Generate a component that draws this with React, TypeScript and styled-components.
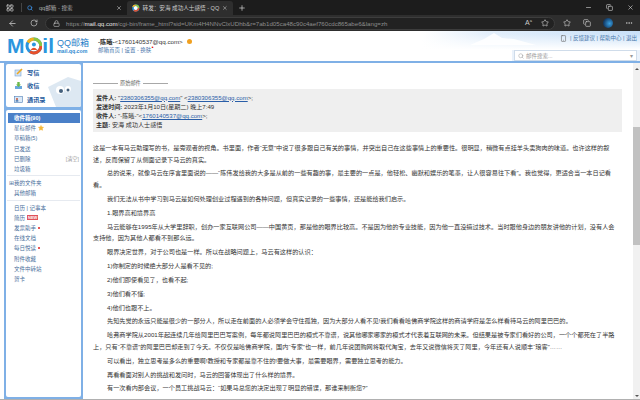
import styled, { createGlobalStyle } from 'styled-components';
import { ArrowLeft, RotateCw, Lock, Plus, X, Minus, Copy, Star, Ellipsis, Search, Smartphone, LayoutGrid } from 'lucide-react';

const GlobalStyle = createGlobalStyle`
  html, body { margin: 0; padding: 0; background: #fff; }
  body { font-family: "Liberation Sans", "Noto Sans CJK SC", sans-serif; }
`;

const Page = styled.div`
  width: 640px;
  height: 400px;
  overflow: hidden;
  display: flex;
  flex-direction: column;
  font-size: 6.25px;
  color: #333;
`;

const TabBar = styled.div`
  height: 15px;
  background: #1c1c1c;
  display: flex;
  align-items: flex-end;
  padding-left: 6px;
  color: #bbb;
  flex: none;
`;

const TabSwitch = styled.div`
  width: 16px;
  height: 9px;
  display: flex;
  align-items: center;
  border-right: 1px solid #444;
  box-sizing: border-box;
  margin-bottom: 3px;
  color: #ddd;
`;

const Tab = styled.div<{ $active?: boolean }>`
  width: ${(p) => (p.$active ? '106px' : '105px')};
  height: 14px;
  box-sizing: border-box;
  padding: 0 5px;
  display: flex;
  align-items: center;
  gap: ${(p) => (p.$active ? '3px' : '6px')};
  border-radius: 3px 3px 0 0;
  font-size: 5.6px;
  background: ${(p) => (p.$active ? '#2e2e2e' : 'transparent')};
  color: ${(p) => (p.$active ? '#ccc' : '#aaa')};
  span { flex: 1; white-space: nowrap; }
`;

const NewTab = styled.div`
  margin: 0 0 3px 5px;
  height: 8px;
  color: #ddd;
`;

const WindowButtons = styled.div`
  margin-left: auto;
  display: flex;
  gap: 14px;
  padding: 0 6px 4px 0;
  color: #ddd;
`;

const AddressBar = styled.div`
  height: 16px;
  background: #2e2e2e;
  display: flex;
  align-items: center;
  padding: 0 6px 0 8px;
  color: #ccc;
  flex: none;
`;

const NavButtons = styled.div`
  display: flex;
  gap: 13px;
  width: 37px;
  flex: none;
`;

const UrlPill = styled.div`
  width: 510px;
  height: 13px;
  box-sizing: border-box;
  border: 1px solid #3d3d3d;
  border-radius: 7px;
  background: #222;
  display: flex;
  align-items: center;
  padding: 0 5px 0 7px;
  gap: 6px;
  flex: none;
`;

const Url = styled.div`
  flex: 1;
  font-size: 6.15px;
  white-space: nowrap;
  color: #8d8d8d;
  b { color: #e4e4e4; font-weight: 400; }
`;

const ReadAloud = styled.div`
  font-size: 7px;
  line-height: 8px;
  color: #ccc;
  margin-right: 3px;
  sup { font-size: 4px; line-height: 0; }
`;

const ToolIcons = styled.div`
  display: flex;
  align-items: center;
  gap: 12px;
  margin-left: 8px;
`;

const Avatar = styled.div`
  width: 10px;
  height: 10px;
  border-radius: 50%;
  background: radial-gradient(circle at 65% 55%, #3aa0e0, #123a66 70%);
`;

const MailHeader = styled.div`
  height: 32px;
  flex: none;
  box-sizing: border-box;
  border-bottom: 2px solid #7fb0e6;
  display: flex;
  position: relative;
  background:
    linear-gradient(to bottom, rgba(255, 255, 255, 0) 10%, #fff 62%),
    linear-gradient(90deg, #fff 66%, #e3effb 76%, #c9e0f8 100%);
`;

const Logo = styled.div`
  width: 90px;
  margin-left: 7px;
  flex: none;
  display: flex;
  align-items: center;
  gap: 3px;
`;

const LogoWord = styled.div`
  font: 700 21px/20px "Liberation Sans", sans-serif;
  color: #2b96de;
  display: flex;
  align-items: center;
  width: 47px;
`;

const LogoSide = styled.div`
  display: flex;
  flex-direction: column;
  color: #2a7fc8;
  font-size: 9px;
  line-height: 10px;
  white-space: nowrap;
  small { font-size: 5.2px; line-height: 7px; font-weight: 700; color: #2f8ad0; }
`;

const Account = styled.div`
  margin-left: 1px;
  padding-top: 6px;
  line-height: 9px;
  font-size: 6.2px;
  white-space: nowrap;
  color: #333;
  b { font-weight: 700; }
`;

const AccountLinks = styled.div`
  color: #4a78ac;
  font-size: 5.5px;
  line-height: 9px;
  sup { color: #d00; font-size: 6px; line-height: 0; }
`;

const InfoDot = styled.span`
  display: inline-block;
  width: 5px;
  height: 5px;
  margin-left: 4px;
  border-radius: 50%;
  background: #f0a020;
`;

const HeaderRight = styled.div`
  margin-left: auto;
  width: 128px;
  padding: 3px 3px 0 0;
  box-sizing: border-box;
  display: flex;
  flex-direction: column;
  align-items: flex-end;
  gap: 7px;
  position: relative;
`;

const HeaderLinks = styled.div`
  display: flex;
  align-items: center;
  gap: 3px;
  font-size: 5.5px;
  line-height: 9px;
  color: #4a78ac;
  white-space: nowrap;
`;

const SearchStrip = styled.div`
  align-self: stretch;
  margin-right: -3px;
  padding: 0 3px 0 2px;
  height: 11px;
  background: #eaf2fb;
`;

const SearchBox = styled.div`
  height: 9px;
  background: #fff;
  border: 1px solid #cfdcea;
  display: flex;
  align-items: center;
  gap: 2px;
  padding: 0 3px;
  color: #999;
  font-size: 5.5px;
  span { flex: 1; }
`;

const Clouds = styled.svg`
  position: absolute;
  left: 470px;
  top: 0;
`;

const Body = styled.div`
  flex: 1;
  display: flex;
  min-height: 0;
`;

const Sidebar = styled.div`
  width: 79px;
  margin-left: 4px;
  flex: none;
  box-sizing: border-box;
  background: #7fb0e6;
  padding: 1px 2px 2px;
  display: flex;
  flex-direction: column;
  gap: 3px;
`;

const QuickBox = styled.div`
  height: 43px;
  flex: none;
  background: #fff;
  border-radius: 2px;
  position: relative;
  overflow: hidden;
  padding: 1.5px 0 0 8px;
  display: flex;
  flex-direction: column;
  gap: 0.5px;
  box-sizing: border-box;
`;

const QuickItem = styled.div`
  height: 13px;
  display: flex;
  align-items: center;
  gap: 4px;
  font-size: 6.2px;
  font-weight: 700;
  color: #245a9c;
  position: relative;
`;

const Penguin = styled.svg`
  position: absolute;
  right: 0;
  bottom: 0;
`;

const FolderBox = styled.div`
  flex: 1;
  background: #fff;
  border-radius: 2px;
  padding-top: 3px;
  color: #4a6f9c;
`;

const FolderRow = styled.div<{ $selected?: boolean; $group?: boolean }>`
  height: 10.2px;
  line-height: 10px;
  font-size: 5.5px;
  margin: 0 1px 0 2px;
  padding-left: ${(p) => (p.$group ? '1px' : '6px')};
  display: flex;
  align-items: center;
  white-space: nowrap;
  background: ${(p) => (p.$selected ? '#4a80c8' : 'transparent')};
  color: ${(p) => (p.$selected ? '#fff' : '#4a6f9c')};
  font-weight: ${(p) => (p.$selected ? 700 : 400)};
`;

const Divider = styled.div`
  height: 1px;
  background: #e6eaf0;
  margin: 1px 1px 2px;
`;

const ClearTag = styled.span`
  margin-left: auto;
  margin-right: 1px;
  color: #999;
  font-size: 5.2px;
`;

const NewBadge = styled.span`
  background: #e0525a;
  color: #fff;
  font: 700 4px/5px "Liberation Sans", sans-serif;
  padding: 0 1px;
  margin-left: 2px;
`;

const RedDot = styled.span`
  width: 2px;
  height: 2px;
  border-radius: 50%;
  background: #e02020;
  margin-left: 2px;
`;

const Content = styled.div`
  flex: 1;
  min-width: 0;
  padding: 14px 11px 0 10px;
  color: #333;
  overflow: hidden;
`;

const OriginalMark = styled.div`
  display: flex;
  align-items: center;
  gap: 2px;
  font-size: 5.2px;
  line-height: 12px;
  color: #666;
  i { width: 25px; height: 1px; background: #a8a8a8; display: block; }
`;

const QuoteBox = styled.div`
  background: #efefef;
  padding: 3.5px 3px;
  height: 43px;
  box-sizing: border-box;
  margin: 0 0 10px;
  font-size: 6.1px;
  line-height: 9.3px;
  color: #333;
  white-space: nowrap;
  b { font-weight: 700; }
  a { color: #2a5ea8; text-decoration: underline; }
`;

const Para = styled.p<{ $indent?: boolean }>`
  margin: 0 0 2.4px;
  padding-right: 2px;
  font-size: 6.18px;
  line-height: 11.5px;
  text-indent: ${(p) => (p.$indent ? '14px' : '0')};
`;

const Scrollbar = styled.div`
  width: 7px;
  flex: none;
  background: #f1f1f1;
  display: flex;
  flex-direction: column;
  align-items: center;
`;

const ScrollArrow = styled.div<{ $down?: boolean }>`
  width: 0;
  height: 0;
  margin: ${(p) => (p.$down ? '2px' : '5px')} 0 2px;
  border-left: 2px solid transparent;
  border-right: 2px solid transparent;
  border-${(p) => (p.$down ? 'top' : 'bottom')}: 2px solid #555;
`;

const ScrollThumb = styled.div`
  width: 100%;
  height: 118px;
  margin-top: 55px;
  background: #c1c1c1;
`;

const ScrollSpace = styled.div`
  flex: 1;
`;

const BottomEdge = styled.div`
  height: 1px;
  flex: none;
  background: #b0b0b0;
`;

function LogoRing() {
  return (
    <svg width="18" height="18" viewBox="0 0 18 18">
      <circle cx="9" cy="9" r="7" fill="none" stroke="#2b96de" strokeWidth="3" />
      <path d="M3 5.4 A7 7 0 0 1 9 2" fill="none" stroke="#f4b21c" strokeWidth="3" />
      <path d="M9 2 A7 7 0 0 1 16 9" fill="none" stroke="#8cc63f" strokeWidth="3" />
      <path d="M16 9 A7 7 0 0 1 5 14.7" fill="none" stroke="#e8502a" strokeWidth="3" />
      <circle cx="9" cy="7.5" r="2" fill="#2b96de" />
      <path d="M5.5 13 Q9 8.5 12.5 13 Z" fill="#e8502a" />
    </svg>
  );
}

function TabLogo() {
  return (
    <svg width="8" height="8" viewBox="0 0 8 8">
      <circle cx="4" cy="4" r="3" fill="#fff" stroke="#2a94dc" strokeWidth="1.6" />
      <path d="M1 3 A3 3 0 0 1 4 1" fill="none" stroke="#f4b21c" strokeWidth="1.6" />
      <path d="M4 1 A3 3 0 0 1 7 4" fill="none" stroke="#8cc63f" strokeWidth="1.6" />
      <path d="M7 4 A3 3 0 0 1 2 6.3" fill="none" stroke="#e8502a" strokeWidth="1.6" />
    </svg>
  );
}

function ComposeIcon() {
  return (
    <svg width="9" height="9" viewBox="0 0 9 9">
      <rect x="1" y="2" width="6" height="6" fill="#cfe2f7" stroke="#7ba3d0" strokeWidth="0.6" />
      <path d="M3 6 L8 1" stroke="#f2a81c" strokeWidth="1.6" />
    </svg>
  );
}

function InboxIcon() {
  return (
    <svg width="9" height="9" viewBox="0 0 9 9">
      <rect x="1" y="5" width="7" height="3" fill="#69a8dc" />
      <path d="M3.3 1 H5.7 V3.5 H7 L4.5 6 L2 3.5 H3.3 Z" fill="#6cb84a" />
    </svg>
  );
}

function ContactsIcon() {
  return (
    <svg width="9" height="9" viewBox="0 0 9 9">
      <rect x="0.5" y="1.5" width="8" height="6" fill="#dbe9f8" stroke="#4f7fb8" strokeWidth="0.6" />
      <circle cx="3" cy="4" r="1" fill="#c0563a" />
      <rect x="1.7" y="5.2" width="2.6" height="1.4" fill="#3f6ea8" />
    </svg>
  );
}

function App() {
  return (
    <Page>
      <GlobalStyle />
      <TabBar>
        <TabSwitch>
          <LayoutGrid size={8} />
        </TabSwitch>
        <Tab>
          <Search size={6} color="#3b8ee0" strokeWidth={3} />
          <span>qq邮箱 - 搜索</span>
          <X size={6} color="#ddd" />
        </Tab>
        <Tab $active>
          <TabLogo />
          <span>转发：安海 成功人士感悟 - QQ</span>
          <X size={6} color="#ddd" />
        </Tab>
        <NewTab>
          <Plus size={8} />
        </NewTab>
        <WindowButtons>
          <Minus size={7} />
          <Copy size={7} />
          <X size={7} />
        </WindowButtons>
      </TabBar>
      <AddressBar>
        <NavButtons>
          <ArrowLeft size={9} />
          <RotateCw size={8} />
        </NavButtons>
        <UrlPill>
          <Lock size={7} />
          <Url>
            https://<b>mail.qq.com</b>/cgi-bin/frame_html?sid=UKm4H4NNvClxUDhb&amp;r=7ab1d05ca48c90c4aef760cdc865abe6&amp;lang=zh
          </Url>
          <ReadAloud>
            A<sup>a</sup>
          </ReadAloud>
          <Star size={8} />
        </UrlPill>
        <ToolIcons>
          <Star size={8} />
          <Copy size={8} />
          <Avatar />
          <Ellipsis size={8} />
        </ToolIcons>
      </AddressBar>
      <MailHeader>
        <Clouds width="66" height="14" viewBox="0 0 66 14">
          <path d="M0 14 L14 8 L24 2 L32 7 L44 8 L66 14 Z" fill="#fff" opacity="0.85" />
        </Clouds>
        <Logo>
          <LogoWord>
            M<LogoRing />il
          </LogoWord>
          <LogoSide>
            QQ邮箱
            <small>mail.qq.com</small>
          </LogoSide>
        </Logo>
        <Account>
          <b>-陈曦-</b>&lt;1760140537@qq.com&gt;
          <InfoDot />
          <AccountLinks>
            邮箱首页 | 设置 - 换肤<sup>•</sup>
          </AccountLinks>
        </Account>
        <HeaderRight>
          <HeaderLinks>
            <Smartphone size={7} color="#666" /> | 反馈建议 | 帮助中心 | 退出
          </HeaderLinks>
          <SearchStrip>
            <SearchBox>
              <Search size={6} />
              <span>邮件搜索...</span>▾
            </SearchBox>
          </SearchStrip>
        </HeaderRight>
      </MailHeader>
      <Body>
        <Sidebar>
          <QuickBox>
            <Penguin width="33" height="32" viewBox="0 0 33 32">
              <path d="M0 12 L20 2 L33 6 V32 H8 Z" fill="#dde8f2" />
              <circle cx="12" cy="15" r="4" fill="#fff" />
              <circle cx="20" cy="14" r="3" fill="#fff" />
              <circle cx="13" cy="16" r="2" fill="#44607c" />
              <circle cx="20" cy="15" r="1.5" fill="#44607c" />
            </Penguin>
            <QuickItem>
              <ComposeIcon />
              写信
            </QuickItem>
            <QuickItem>
              <InboxIcon />
              收信
            </QuickItem>
            <QuickItem>
              <ContactsIcon />
              通讯录
            </QuickItem>
          </QuickBox>
          <FolderBox>
            <FolderRow $selected>收件箱(90)</FolderRow>
            <FolderRow>
              星标邮件 <Star size={6} fill="#f4b93c" color="#f4b93c" style={{ marginLeft: 2 }} />
            </FolderRow>
            <FolderRow>草稿箱(5)</FolderRow>
            <FolderRow>已发送</FolderRow>
            <FolderRow>
              已删除<ClearTag>[清空]</ClearTag>
            </FolderRow>
            <FolderRow>垃圾箱</FolderRow>
            <Divider />
            <FolderRow $group>⊞我的文件夹</FolderRow>
            <FolderRow>其他邮箱</FolderRow>
            <Divider />
            <FolderRow>日历 | 记事本</FolderRow>
            <FolderRow>
              简历<NewBadge>NEW</NewBadge>
            </FolderRow>
            <FolderRow>
              发票助手<RedDot />
            </FolderRow>
            <FolderRow>在线文档</FolderRow>
            <FolderRow>
              每日悦读
              <RedDot />
            </FolderRow>
            <FolderRow>附件收藏</FolderRow>
            <FolderRow>文件中转站</FolderRow>
            <FolderRow>贺卡</FolderRow>
          </FolderBox>
        </Sidebar>
        <Content>
          <OriginalMark>
            <i />
            原始邮件
            <i />
          </OriginalMark>
          <QuoteBox>
            <b>发件人:</b> "<a>2380306355@qq.com</a>" &lt;<a>2380306355@qq.com</a>&gt;;
            <br />
            <b>发送时间:</b> 2023年1月10日(星期二) 晚上7:49
            <br />
            <b>收件人:</b> "-陈曦-"&lt;<a>1760140537@qq.com</a>&gt;;
            <br />
            <b>主题:</b> 安海 成功人士感悟
          </QuoteBox>
          <Para>
            这是一本有马云助理写的书，是旁观者的视角。书里面，作者“无意”中说了很多跟自己有关的事情，并突出自己在这些事情上的重要性。很明显，稍微有点挂羊头卖狗肉的味道。也许这样的叙述，反而保留了从侧面记录下马云的真实。
          </Para>
          <Para $indent>
            总的说来，就像马云在序言里面说的——“陈伟发给我的大多是从前的一些有趣的事，最主要的一点是，他轻松、幽默和娱乐的笔墨，让人很容易往下看”。我也觉得，更适合当一本日记看看。
          </Para>
          <Para $indent>我们无法从书中学习到马云是如何处理创业过程遇到的各种问题，但真实记录的一些事情，还是能给我们启示。</Para>
          <Para $indent>1.眼界高和境界高</Para>
          <Para $indent>
            马云能够在1995年从大学里辞职，创办一家互联网公司——中国黄页，那是他的眼界比较高。不是因为他的专业技能，因为他一直没搞过技术。当时跟他身边的朋友讲他的计划，没有人会支持他，因为其他人都看不到那么远。
          </Para>
          <Para $indent>眼界决定世界，对于公司也是一样。所以在战略问题上，马云有这样的认识：</Para>
          <Para $indent>1)你制定的时候绝大部分人是看不见的;</Para>
          <Para $indent>2)他们即使看见了，也看不起;</Para>
          <Para $indent>3)他们看不懂;</Para>
          <Para $indent>4)他们也跟不上。</Para>
          <Para $indent>
            先知先觉的永远只能是很少的一部分人，所以走在前面的人必须学会守住孤独，因为大部分人看不见!我们看看哈佛商学院这样的商请学府是怎么样看待马云的阿里巴巴的。
          </Para>
          <Para $indent>
            哈弗商学院从2001年起连续几年给阿里巴巴写案例，每年都说阿里巴巴的模式不靠谱，说其他哪家哪家的模式才代表着互联网的未来。但结果是被专家们看好的公司，一个个都死在了半路上，只有“不靠谱”的阿里巴巴却走到了今天。不仅仅是哈佛商学院，国内“专家”也一样，前几年说团购网将取代淘宝，去年又说微信将灭了阿里，今年还有人说顺丰“琅客”……
          </Para>
          <Para $indent>可以看出，独立思考是多么的重要啊!教授和专家都是靠不住的!要做大事，最需要眼界，需要独立思考的能力。</Para>
          <Para $indent>再看看面对别人的挑战和发问时，马云的回答体现出了什么样的境界。</Para>
          <Para $indent>有一次看内部会议，一个员工挑战马云：“如果马总您的决定出现了明显的错误，那谁来制衡您?”</Para>
        </Content>
        <Scrollbar>
          <ScrollArrow />
          <ScrollThumb />
          <ScrollSpace />
          <ScrollArrow $down />
        </Scrollbar>
      </Body>
      <BottomEdge />
    </Page>
  );
}

export default App;
